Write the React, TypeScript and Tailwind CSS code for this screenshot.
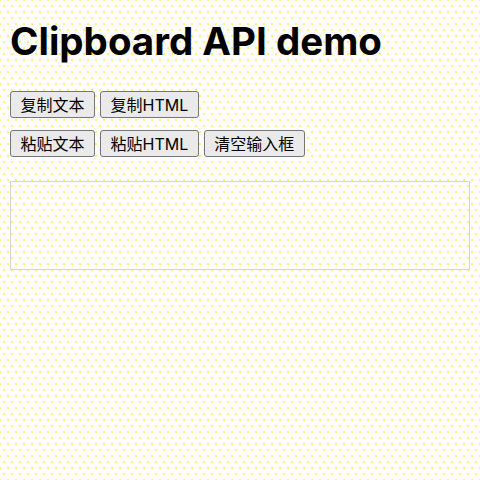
import React from "react";

const btn =
  "h-[27px] px-[9.5px] border border-[#767676] rounded-[3px] bg-[#eaeaea] text-[16px] leading-none text-black flex items-center";

export default function App() {
  return (
    <div
      lang="zh-CN"
      className="w-[480px] h-[480px] bg-[#fdfdfe] bg-[radial-gradient(circle,#faf07a_0.8px,transparent_1.1px),radial-gradient(circle,#faf07a_0.8px,transparent_1.1px)] bg-[length:8px_12px] bg-[position:0_0,4px_6px] px-[10px] pt-[18px]"
      style={{ fontFamily: "Inter, 'Noto Sans CJK SC', sans-serif" }}
    >
      <h1 className="text-[38.5px] font-bold leading-[46px] text-black">Clipboard API demo</h1>
      <div className="flex gap-[5px] mt-[27px]">
        <button className={btn}>复制文本</button>
        <button className={btn}>复制HTML</button>
      </div>
      <div className="flex gap-[5px] mt-[12px]">
        <button className={btn}>粘贴文本</button>
        <button className={btn}>粘贴HTML</button>
        <button className={btn}>清空输入框</button>
      </div>
      <div className="mt-[24px] w-[460px] h-[89px] border border-[#d4d4d4]" contentEditable suppressContentEditableWarning></div>
    </div>
  );
}
